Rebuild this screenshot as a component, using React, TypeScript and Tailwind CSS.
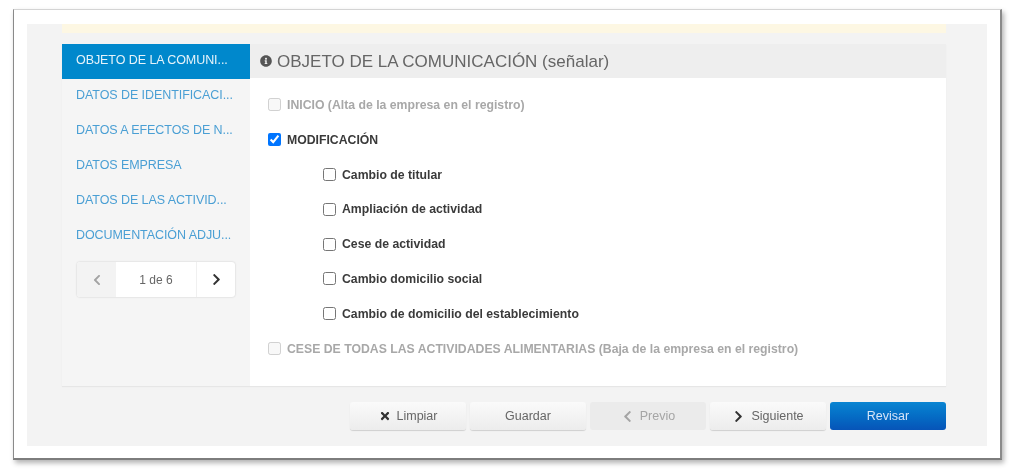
import { FaInfoCircle, FaChevronLeft, FaChevronRight, FaTimes } from 'react-icons/fa'

// the reference shows these already shortened
const TABS = [
  'OBJETO DE LA COMUNI...',
  'DATOS DE IDENTIFICACI...',
  'DATOS A EFECTOS DE N...',
  'DATOS EMPRESA',
  'DATOS DE LAS ACTIVID...',
  'DOCUMENTACIÓN ADJU...',
]

const SUB_OPTIONS = [
  'Cambio de titular',
  'Ampliación de actividad',
  'Cese de actividad',
  'Cambio domicilio social',
  'Cambio de domicilio del establecimiento',
]

function Option({
  label,
  checked = false,
  disabled = false,
  nested = false,
}: {
  label: string
  checked?: boolean
  disabled?: boolean
  nested?: boolean
}) {
  return (
    <label
      className={`flex h-[34.9px] items-center gap-[6px] text-[12.25px] font-bold ${nested ? 'pl-[73px]' : 'pl-[18px]'} ${disabled ? 'text-[#a8a8a8]' : 'text-[#3a3a3a]'}`}
    >
      <input type="checkbox" defaultChecked={checked} disabled={disabled} className="m-0 h-[13px] w-[13px] shrink-0" />
      <span className="pt-[1px]">{label}</span>
    </label>
  )
}

function ActionButton({
  children,
  disabled = false,
}: {
  children: React.ReactNode
  disabled?: boolean
}) {
  return (
    <button
      disabled={disabled}
      className={`flex h-[28px] w-[116px] items-center justify-center gap-[6px] rounded-[3px] text-[12.5px] ${
        disabled
          ? 'bg-[#ebebeb] text-[#a5a5a5]'
          : 'bg-gradient-to-b from-[#fafafa] to-[#ececec] text-[#666666] shadow-[0_1px_1px_rgba(0,0,0,0.15)]'
      }`}
    >
      {children}
    </button>
  )
}

export default function App() {
  return (
    <div className="h-[470px] w-[1013px] overflow-hidden bg-white pl-[13px] pt-[9px] font-['Liberation_Sans',Arial,sans-serif]">
      <div className="h-[451px] w-[989px] border-b-2 border-l border-r-2 border-t border-b-[#7d7d7d] border-l-[#8a8a8a] border-r-[#8a8a8a] border-t-[#d4d4d4] bg-white pb-[12px] pl-[13px] pr-[13px] pt-[14px] shadow-[2px_3px_5px_rgba(0,0,0,0.3)] blur-[0.5px]">
        <div className="h-[422px] bg-[#f3f3f3] pl-[35px] pr-[41px]">
          {/* Aviso superior */}
          <div className="h-[9px] bg-[#fdf7e3]" />

          {/* Tarjeta principal */}
          <div className="mt-[11px] flex h-[342px] bg-white shadow-[0_1px_1px_rgba(0,0,0,0.05)]">
            <div className="w-[188px] shrink-0 bg-[#f5f5f5]">
              {TABS.map((tab, i) => (
                <div
                  key={tab}
                  className={`flex h-[35px] items-center whitespace-nowrap pb-[2px] pl-[14px] text-[12.5px] tracking-[-0.07px] ${
                    i === 0 ? 'bg-[#0088cc] text-[#e6f3fa]' : 'text-[#4a9fd4]'
                  }`}
                >
                  {tab}
                </div>
              ))}

              <div className="ml-[15px] mt-[8px] flex h-[35px] w-[158px] items-center rounded-[3px] bg-white text-[12px] text-[#666666] shadow-[0_0_2px_rgba(0,0,0,0.2)]">
                <span className="flex h-full w-[39px] items-center justify-center rounded-l-[3px] bg-[#f3f3f3] text-[#a3a3a3]">
                  <FaChevronLeft size={12} />
                </span>
                <span className="flex-1 text-center">1 de 6</span>
                <span className="flex h-full w-[39px] items-center justify-center border-l border-[#f0f0f0] text-[#333333]">
                  <FaChevronRight size={13} />
                </span>
              </div>
            </div>

            <div className="min-w-0 flex-1">
              <div className="flex h-[34px] items-center gap-[5px] bg-[#eeeeee] pl-[10px] text-[17px] text-[#666666]">
                <FaInfoCircle size={12} className="text-[#555555]" />
                <span className="pt-[1px]">OBJETO DE LA COMUNICACIÓN (señalar)</span>
              </div>
              <div className="pt-[9px]">
                <Option label="INICIO (Alta de la empresa en el registro)" disabled />
                <Option label="MODIFICACIÓN" checked />
                {SUB_OPTIONS.map((option) => (
                  <Option key={option} label={option} nested />
                ))}
                <Option label="CESE DE TODAS LAS ACTIVIDADES ALIMENTARIAS (Baja de la empresa en el registro)" disabled />
              </div>
            </div>
          </div>

          {/* Botones */}
          <div className="mt-[16px] flex justify-end gap-[4px]">
            <ActionButton>
              <FaTimes size={12} className="text-[#333333]" /> Limpiar
            </ActionButton>
            <ActionButton>Guardar</ActionButton>
            <ActionButton disabled>
              <FaChevronLeft size={13} /> Previo
            </ActionButton>
            <ActionButton>
              <FaChevronRight size={13} className="text-[#333333]" /> Siguiente
            </ActionButton>
            <button className="h-[28px] w-[116px] rounded-[3px] bg-gradient-to-b from-[#0a85d2] to-[#0754b8] text-[12.5px] text-[#d4e4f7]">
              Revisar
            </button>
          </div>
        </div>
      </div>
    </div>
  )
}
